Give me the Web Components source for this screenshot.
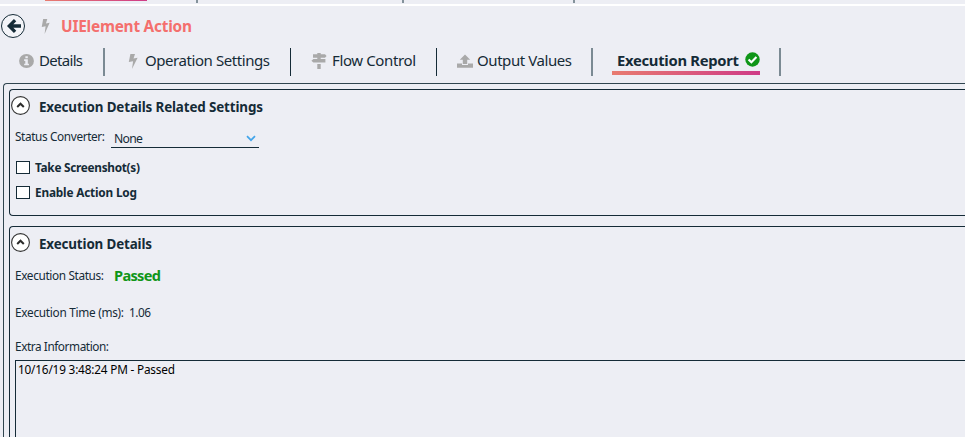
<!DOCTYPE html>
<html lang="en">
<head>
<meta charset="utf-8">
<title>UIElement Action</title>
<style>
html,body{margin:0;height:100%;overflow:hidden}
body{background:#edeef4;color:#152b37;font-family:"Noto Sans","Open Sans",sans-serif}
</style>
</head>
<body>
<action-page></action-page>
<script>
const define = (name, html, setup) => customElements.define(name, class extends HTMLElement {
  connectedCallback() {
    if (this.shadowRoot) return;
    this.attachShadow({mode: "open"}).innerHTML = html;
    if (setup) setup(this, this.shadowRoot);
  }
});

// A one-line label whose tracking is adjusted to fill the width given in "w".
define("fit-text", `<style>
  :host{display:inline-block;white-space:nowrap;flex:none;line-height:20px}
</style><span><slot></slot></span>`, (el, root) => {
  const w = +el.getAttribute("w");
  const span = root.querySelector("span");
  el.style.width = w + "px";
  const n = el.textContent.length;
  span.style.letterSpacing = (w - span.getBoundingClientRect().width) / (n - 1) + "px";
});

const icons = {
  bolt: ["0 0 10 16", `<path d="M2.4 0H7L5.5 4.7 9.6 4 4 16 5.1 7.6.8 8.5Z"/>`],
  info: ["0 0 16 16", `<circle cx="8" cy="8" r="7.9"/><path fill="#edeef4" d="M6.8 2.5h2.6v2.3H6.8zM5.5 6h3.9v5h1.2v1.9H5.5V11h1.2V7.9H5.5z"/>`],
  sign: ["0 0 16 16", `<path d="M6.3 0h3.4v1.2H14l1.6 1.7L14 4.7H2V1.2h4.3zM6.3 4.7h3.4v1.4H6.3zM2.4 6.1h12v3.5h-12L.4 7.8zM6.3 11h3.4v5H6.3z"/>`],
  upload: ["0 0 16 16", `<path d="M8 .6l5.2 5.5h-3v4.5H5.8V6.1h-3zM0 10.2h5v1.6h6v-1.6h5v4.4H0z"/>`],
  check: ["0 0 16 16", `<circle cx="8" cy="8" r="7.7"/><path d="M3.8 7.9l3 3 5.4-5.5" fill="none" stroke="#fff" stroke-width="2.3"/>`],
  back: ["0 0 24 24", `<circle cx="12" cy="12" r="11.5" fill="#f3f4f8" stroke="#152b37"/><path d="M20 12H9M14.1 6.2L8.3 12l5.8 5.8" fill="none" stroke="#152b37" stroke-width="3.3"/>`],
  fold: ["0 0 19 19", `<circle cx="9.5" cy="9.5" r="8.9" fill="#fff" stroke="#333" stroke-width="1.1"/><path d="M6.2 11l3.3-3.3 3.3 3.3" fill="none" stroke="#2b2b2b" stroke-width="2"/>`],
  down: ["0 0 10 7", `<path d="M1 1.2l4 4 4-4" fill="none" stroke="#43a5ea" stroke-width="1.7"/>`]
};
define("ui-icon", `<style>:host{display:block;flex:none;color:#a9a9a9}svg{display:block;fill:currentColor;width:100%;height:100%}</style>`, (el, root) => {
  const [box, body] = icons[el.getAttribute("name")];
  el.style.width = el.getAttribute("w") + "px";
  el.style.height = el.getAttribute("h") + "px";
  root.innerHTML += `<svg viewBox="${box}" preserveAspectRatio="none">${body}</svg>`;
});

define("parent-tabs", `<style>
  :host{display:grid;grid-template-columns:45px 102px 51px 206px 171px 1fr;height:4px;border-bottom:2px solid #fff}
  i{box-sizing:border-box;height:3px;border-right:2px solid #84929b}
  .a{height:1px;background:linear-gradient(90deg,#e87c70,#cf3b87);border:0}
  .n{border:0}
</style><i class="n"></i><i class="a"></i><i></i><i></i><i></i>`);

define("page-title", `<style>
  :host{display:flex;align-items:center;height:40px;padding-left:1px;box-sizing:border-box}
  .b{margin:0 11px 0 16px}
  fit-text{font-size:15.4px;font-weight:700;color:#f46f6d;margin-top:2px}
</style><ui-icon name="back" w="24" h="24"></ui-icon><ui-icon class="b" name="bolt" w="9" h="15"></ui-icon><fit-text w="131">UIElement Action</fit-text>`);

define("tab-item", `<style>
  :host{display:flex;align-items:center;box-sizing:border-box;height:28px;border-right:1px solid #152b37;font-size:15px}
  :host([soft]){border-right:2px solid #7b8a93}
  .in{display:flex;align-items:center;height:26px;padding-bottom:2px;box-sizing:border-box}
  :host(:not([active])) ::slotted(fit-text){margin-top:-2px}
  :host([active]){font-weight:700;font-size:14.8px}
  :host([active]) .in{height:26px;padding:0 1px 1px 5px;border-bottom:4px solid;border-image:linear-gradient(90deg,#e87c70,#cf3b87) 1;width:148px}
  ::slotted(ui-icon[name=check]){color:#109618;margin-left:6px}
</style><div class="in"><slot></slot></div>`, el => {
  el.style.width = el.getAttribute("span") + "px";
  el.style.paddingLeft = el.getAttribute("lead") + "px";
});

define("tab-bar", `<style>:host{display:flex;height:36px;padding-top:2px;box-sizing:border-box}
.g5{margin-right:5px}.g7{margin-right:7px}.g6{margin-right:4px}</style>
<tab-item span="105" lead="19" soft><ui-icon class="g5" name="info" w="15" h="14"></ui-icon><fit-text w="44">Details</fit-text></tab-item>
<tab-item span="186" lead="23"><ui-icon class="g7" name="bolt" w="10" h="15"></ui-icon><fit-text w="125">Operation Settings</fit-text></tab-item>
<tab-item span="146" lead="20"><ui-icon class="g5" name="sign" w="16" h="16"></ui-icon><fit-text w="84">Flow Control</fit-text></tab-item>
<tab-item span="156" lead="20" soft><ui-icon class="g6" name="upload" w="16" h="15"></ui-icon><fit-text w="95">Output Values</fit-text></tab-item>
<tab-item span="188" lead="19" active soft><fit-text w="122">Execution Report</fit-text><ui-icon name="check" w="15" h="15"></ui-icon></tab-item>`);

define("group-box", `<style>
  :host{display:block;box-sizing:border-box;border:1px solid #152b37;border-right:0;border-radius:4px 0 0 4px;padding-left:5px}
  header{display:flex;align-items:center;gap:9px;height:31px;margin:0 0 1px -4px;font-size:13.4px;font-weight:700}
  ::slotted([slot=title]){margin-top:2px}
</style><header><ui-icon name="fold" w="19" h="19"></ui-icon><slot name="title"></slot></header><slot></slot>`);

define("check-line", `<style>
  :host{display:flex;align-items:center;gap:5px;height:25px;padding-left:1px;font-size:11.8px;font-weight:700}
  i{width:14px;height:13px;box-sizing:border-box;border:1px solid #152b37;background:#fff}
  ::slotted(fit-text){margin-top:-2px}
</style><i></i><slot></slot>`);

define("select-box", `<style>
  :host{display:flex;align-items:center;justify-content:space-between;box-sizing:border-box;width:148px;height:19px;padding:0 3px;border-bottom:1px solid #152b37;font-size:12.2px}
  ::slotted(fit-text){margin-top:3px}
  ui-icon{margin-top:1px}
</style><slot></slot><ui-icon name="down" w="10" h="7"></ui-icon>`);

define("action-page", `<style>
  :host{display:flex;flex-direction:column;height:437px;font-size:11.8px}
  main{flex:1;min-height:0;overflow:hidden;margin:1px 0 0 3px;border:1px solid #30454f;border-right:0;border-bottom:0;border-radius:4px 0 0 0;padding:5px 0 0 5px}
  .first{height:127px;margin-bottom:10px}
  .row{display:flex;align-items:center}
  .conv{height:29px;gap:6px;margin-bottom:4px}
  .conv select-box{margin-top:3px}
  .conv>fit-text{margin-top:-1px}
  .status{height:33px;gap:10px}
  .status fit-text,.time fit-text{margin-top:-2px}
  .status .pass{color:#109618;font-size:14.6px;font-weight:700}
  .time{height:42px;gap:5px}
  .extra{height:26px}
  .extra fit-text{margin-top:-3px}
  .log{border:1px solid #152b37;border-right:0;height:110px;padding-left:2px;color:#000}
  .log fit-text{margin-top:-4px}
</style>
<parent-tabs></parent-tabs><page-title></page-title><tab-bar></tab-bar>
<main>
  <group-box class="first"><fit-text slot="title" w="224">Execution Details Related Settings</fit-text>
    <div class="row conv"><fit-text w="90">Status Converter:</fit-text><select-box><fit-text w="29">None</fit-text></select-box></div>
    <check-line><fit-text w="105">Take Screenshot(s)</fit-text></check-line>
    <check-line><fit-text w="102">Enable Action Log</fit-text></check-line>
  </group-box>
  <group-box><fit-text slot="title" w="113">Execution Details</fit-text>
    <div class="row status"><fit-text w="89">Execution Status:</fit-text><fit-text class="pass" w="47">Passed</fit-text></div>
    <div class="row time"><fit-text w="109">Execution Time (ms):</fit-text><fit-text w="22">1.06</fit-text></div>
    <div class="row extra"><fit-text w="94">Extra Information:</fit-text></div>
    <div class="log"><fit-text w="157">10/16/19 3:48:24 PM - Passed</fit-text></div>
  </group-box>
</main>`);
</script>
</body>
</html>
